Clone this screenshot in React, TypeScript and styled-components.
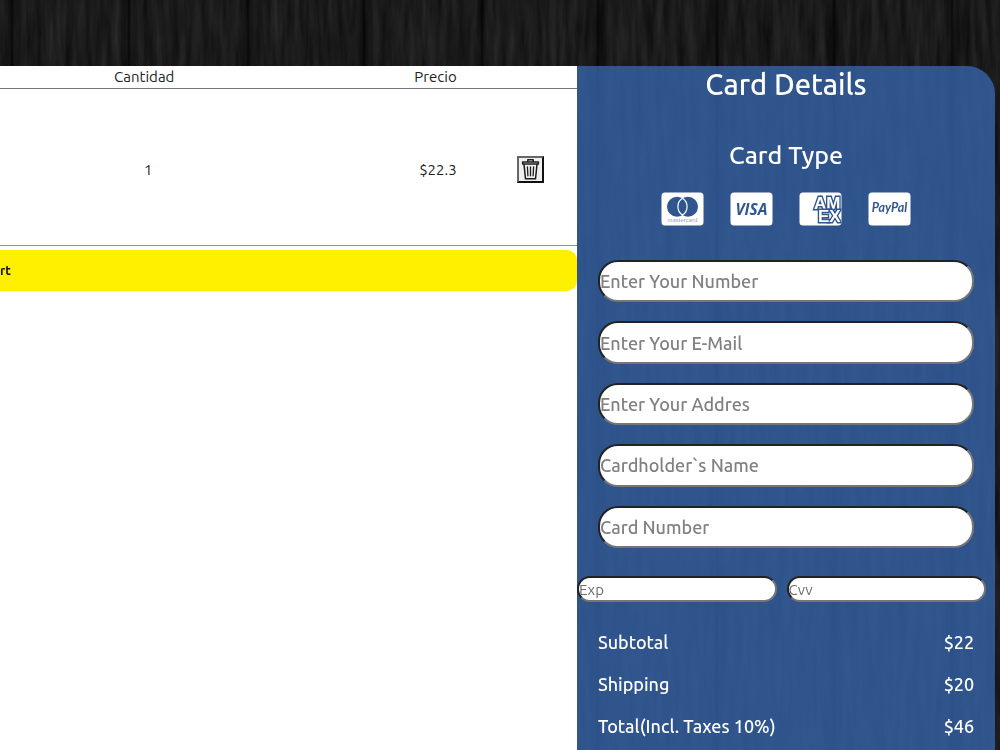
import React from 'react';
import styled, { createGlobalStyle } from 'styled-components';

const Global = createGlobalStyle`
  *, *::before, *::after { box-sizing: border-box; }
  body {
    margin: 0;
    background: #171717;
    font-family: Ubuntu, 'Noto Sans', 'Open Sans', sans-serif;
    font-weight: 500;
    overflow-x: hidden;
  }
`;

const Wood = styled.svg`
  position: fixed;
  inset: 0;
  width: 100%;
  height: 100%;
  z-index: -1;
`;

const Page = styled.main`
  display: grid;
  grid-template-columns: minmax(0, 577fr) minmax(0, 418fr);
  min-height: 100vh;
  padding: 66px 5px 0 0;
`;

const Cart = styled.section`
  background: #fff;
`;

const CartTable = styled.table`
  width: 100%;
  table-layout: fixed;
  border-collapse: collapse;
  color: #222;
  font-size: 15px;
  line-height: 20px;
`;

const Row = styled.tr<{ $tall?: boolean }>`
  height: ${(p) => (p.$tall ? 157 : 22)}px;
  border-bottom: 1px solid ${(p) => (p.$tall ? '#8c95a0' : '#777')};
`;

const Cell = styled.td<{ $end?: boolean; $tall?: boolean; $indent?: boolean }>`
  padding: ${(p) => (p.$tall ? 6 : 0)}px ${(p) => (p.$end ? 28 : 0)}px 0 ${(p) => (p.$indent ? 8 : 0)}px;
  text-align: ${(p) => (p.$end ? 'right' : 'center')};
  font-weight: 400;
  vertical-align: middle;
`;

const Col = styled.col<{ $share: number }>`
  width: ${(p) => p.$share}%;
`;

const DeleteButton = styled.button`
  display: block;
  width: 27px;
  height: 27px;
  margin: 0 auto;
  padding: 0;
  background: #efefef;
  border: 2px solid;
  border-color: #666 #111 #111 #666;

  svg { display: block; width: 100%; height: 100%; }
`;

const CartButton = styled.button`
  display: block;
  width: 100%;
  height: 41px;
  margin-top: 4px;
  padding: 0;
  border: 0;
  border-radius: 0 10px 10px 0;
  background: #fff000;
  color: #111;
  font: 700 13px/20px Ubuntu, 'Noto Sans', sans-serif;
  text-align: left;
`;

const Payment = styled.form`
  display: flex;
  flex-direction: column;
  background: rgba(54, 100, 170, 0.8);
  border-radius: 0 28px 0 0;
  color: #fff;
`;

const Title = styled.h2`
  margin: 0;
  font-size: 29px;
  font-weight: 500;
  line-height: 36px;
  text-align: center;
`;

const Subtitle = styled.h3`
  margin: 36px 0 0;
  font-size: 25px;
  font-weight: 500;
  line-height: 34px;
  text-align: center;
`;

const Brands = styled.div`
  display: flex;
  justify-content: center;
  gap: 26px;
  margin-top: 20px;

  svg { display: block; width: 43px; height: 34px; }
`;

const Fields = styled.div`
  display: grid;
  grid-auto-rows: 1fr;
  gap: 19px;
  height: 288px;
  margin: 34px 5% 0;
`;

const Field = styled.input<{ $small?: boolean }>`
  width: 100%;
  min-width: 0;
  height: ${(p) => (p.$small ? '26px' : 'auto')};
  padding: 0;
  background: #fff;
  border: 2px solid;
  border-color: #222 #767676 #767676 #222;
  border-radius: 20px;
  color: #222;
  font-family: inherit;
  font-weight: ${(p) => (p.$small ? 400 : 500)};
  font-size: ${(p) => (p.$small ? 15 : 18)}px;

  &::placeholder { color: ${(p) => (p.$small ? '#6c6c6c' : '#808080')}; opacity: 1; }
`;

const Pair = styled.div`
  display: grid;
  grid-template-columns: 1fr 1fr;
  gap: 10px;
  margin: 28px 9px 0 0;
`;

const Totals = styled.dl`
  display: grid;
  margin: 19px 5% 0;
`;

const Total = styled.div`
  display: flex;
  justify-content: space-between;
  font-size: 18px;
  line-height: 42px;

  dd { margin: 0; }
`;

const seams = [12, 129, 248, 364, 482, 598, 717, 834, 952, 1070, 1187, 1304, 1422, 1540, 1657, 1774, 1892];

const WoodBackdrop = () => (
  <Wood aria-hidden="true">
    <defs>
      <filter id="grain" x="0" y="0" width="100%" height="100%" colorInterpolationFilters="sRGB">
        <feTurbulence type="fractalNoise" baseFrequency="0.14 0.014" numOctaves="5" seed="7" />
        <feColorMatrix values="0.14 0 0 0 0.035  0.14 0 0 0 0.035  0.14 0 0 0 0.035  0 0 0 0 1" />
      </filter>
      <linearGradient id="seam">
        <stop offset="0" stopColor="#000" stopOpacity="0" />
        <stop offset="0.4" stopColor="#000" stopOpacity="0.3" />
        <stop offset="0.5" stopColor="#000" stopOpacity="0.75" />
        <stop offset="0.6" stopColor="#000" stopOpacity="0.3" />
        <stop offset="1" stopColor="#000" stopOpacity="0" />
      </linearGradient>
    </defs>
    <rect width="100%" height="100%" filter="url(#grain)" />
    {seams.map((x) => (
      <rect key={x} x={x - 10} width="20" height="100%" fill="url(#seam)" />
    ))}
  </Wood>
);

const TrashIcon = () => (
  <svg viewBox="0 0 23 23" fill="none" stroke="#1c1c1c" strokeWidth="1.5" strokeLinecap="round" strokeLinejoin="round" aria-hidden="true">
    <path d="M8.8 3.6V1.8h5.4v1.8M3.6 4h15.8v2H3.6zM5 6.4l1.5 14.4h10L18 6.4" />
    <path strokeWidth="1.3" d="M8.4 8.8l.5 9M11.5 8.8v9M14.6 8.8l-.5 9" />
  </svg>
);

const blue = '#30558f';

const DinersIcon = () => (
  <svg viewBox="0 0 43 34" role="img" aria-label="Mastercard">
    <rect x=".5" y=".5" width="42" height="33" rx="3.5" fill="#fff" />
    <circle cx="16" cy="14.7" r="10" fill={blue} />
    <circle cx="27" cy="14.7" r="10" fill={blue} />
    <path d="M21.5 6.3a10 10 0 0 1 0 16.8a10 10 0 0 1 0-16.8z" fill={blue} stroke="#fff" strokeWidth="1.2" />
    <text x="21.5" y="29.8" textAnchor="middle" fontFamily="Liberation Sans" fontSize="6" fontWeight="400" fill="#8fa3c4">mastercard</text>
  </svg>
);

const VisaIcon = () => (
  <svg viewBox="0 0 43 34" role="img" aria-label="Visa">
    <rect x=".5" y=".5" width="42" height="33" rx="3.5" fill="#fff" />
    <text x="21.5" y="22.5" textAnchor="middle" fontFamily="Open Sans" fontSize="15.5" fontWeight="700" fontStyle="italic" fill={blue}>VISA</text>
  </svg>
);

const AmexIcon = () => (
  <svg viewBox="0 0 43 34" role="img" aria-label="American Express">
    <defs>
      <clipPath id="amex"><rect x=".5" y=".5" width="42" height="33" rx="3.5" /></clipPath>
    </defs>
    <g clipPath="url(#amex)">
      <rect width="43" height="34" fill="#fff" />
      <text fill="#fff" stroke={blue} strokeWidth="2.8" paintOrder="stroke" strokeLinejoin="miter" fontFamily="Liberation Sans" fontWeight="700" fontSize="17">
        <tspan x="15" y="16.6">AM</tspan>
        <tspan x="19" y="29.6">EX</tspan>
      </text>
    </g>
  </svg>
);

const PayPalIcon = () => (
  <svg viewBox="0 0 43 34" role="img" aria-label="PayPal">
    <rect x=".5" y=".5" width="42" height="33" rx="3.5" fill="#fff" />
    <text x="21.5" y="20" textAnchor="middle" fontFamily="Lato" fontSize="12.5" fontWeight="700" fontStyle="italic" fill={blue}>PayPal</text>
  </svg>
);

const fields = [
  { label: 'Enter Your Number', type: 'tel' },
  { label: 'Enter Your E-Mail', type: 'email' },
  { label: 'Enter Your Addres', type: 'text' },
  { label: 'Cardholder`s Name', type: 'text' },
  { label: 'Card Number', type: 'text' },
];

const totals = [
  ['Subtotal', '$22'],
  ['Shipping', '$20'],
  ['Total(Incl. Taxes 10%)', '$46'],
];

export default function App() {
  return (
    <>
      <Global />
      <WoodBackdrop />
      <Page>
        <Cart>
          <CartTable>
            <colgroup>
              <Col $share={50} />
              <Col $share={34} />
              <Col $share={16} />
            </colgroup>
            <thead>
              <Row>
                <Cell as="th" scope="col">Cantidad</Cell>
                <Cell as="th" scope="col" $end>Precio</Cell>
                <Cell />
              </Row>
            </thead>
            <tbody>
              <Row $tall>
                <Cell $tall $indent>1</Cell>
                <Cell $tall $end>$22.3</Cell>
                <Cell $tall>
                  <DeleteButton type="button" aria-label="Eliminar"><TrashIcon /></DeleteButton>
                </Cell>
              </Row>
            </tbody>
          </CartTable>
          <CartButton type="button">rt</CartButton>
        </Cart>
        <Payment>
          <Title>Card Details</Title>
          <Subtitle>Card Type</Subtitle>
          <Brands>
            <DinersIcon />
            <VisaIcon />
            <AmexIcon />
            <PayPalIcon />
          </Brands>
          <Fields>
            {fields.map((f) => (
              <Field key={f.label} type={f.type} placeholder={f.label} aria-label={f.label} />
            ))}
          </Fields>
          <Pair>
            <Field $small placeholder="Exp" aria-label="Exp" />
            <Field $small placeholder="Cvv" aria-label="Cvv" />
          </Pair>
          <Totals>
            {totals.map(([label, value]) => (
              <Total key={label}>
                <dt>{label}</dt>
                <dd>{value}</dd>
              </Total>
            ))}
          </Totals>
        </Payment>
      </Page>
    </>
  );
}
